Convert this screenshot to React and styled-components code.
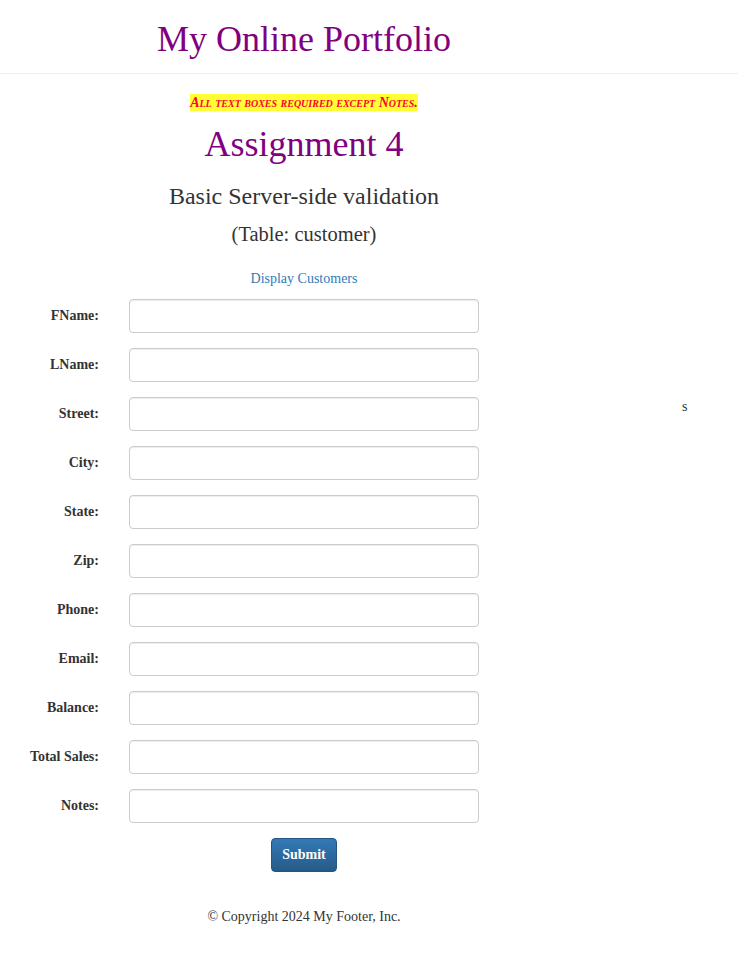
import styled, { createGlobalStyle } from 'styled-components';

const GlobalStyle = createGlobalStyle`
    body{
        margin: 0;
        font-family: "Liberation Serif", "Times New Roman", serif;
        font-size: 14px;
        line-height: 1.42857;
        color: #333333;
        background: #ffffff;
    }
    *{ box-sizing: border-box; }
`;

const fields = ["FName", "LName", "Street", "City", "State", "Zip", "Phone", "Email", "Balance", "Total Sales", "Notes"];

export default function App(){
    return(
        <>
            <GlobalStyle />
            <Header>
                <Brand>My Online Portfolio</Brand>
            </Header>
            <Page>
                <Main>
                    <Notice>All text boxes required except Notes.</Notice>
                    <Title>Assignment 4</Title>
                    <Subtitle>Basic Server-side validation</Subtitle>
                    <TableName>(Table: customer)</TableName>
                    <LinkLine><a href="#">Display Customers</a></LinkLine>
                    <Form onSubmit={(e) => e.preventDefault()}>
                        {fields.map((f) => (
                            <Row key={f}>
                                <Label>{f}:</Label>
                                <Input type="text" />
                            </Row>
                        ))}
                        <ButtonRow>
                            <SubmitButton type="submit">Submit</SubmitButton>
                        </ButtonRow>
                    </Form>
                    <Footer>© Copyright 2024 My Footer, Inc.</Footer>
                </Main>
                <Side>s</Side>
            </Page>
        </>
    )
}

const Header = styled.header`
    height: 74px;
    border-bottom: 1px solid #eeeeee;
    width: 100%;
`;

const Brand = styled.h1`
    width: 608px;
    margin: 0;
    padding-top: 20px;
    text-align: center;
    font-weight: normal;
    font-size: 36px;
    line-height: 1.1;
    color: #800080;
`;

const Page = styled.div`
    display: flex;
`;

const Main = styled.div`
    width: 608px;
    display: flex;
    flex-direction: column;
    align-items: center;
`;

const Side = styled.div`
    padding-top: 323px;
    padding-left: 74px;
    font-size: 14px;
`;

const Notice = styled.p`
    margin: 20px 0 0;
    background: #ffff33;
    color: #ff0033;
    font-weight: bold;
    font-style: italic;
    font-variant: small-caps;
    font-size: 14px;
    line-height: 17px;
`;

const Title = styled.h2`
    margin: 14px 0 0;
    font-weight: normal;
    font-size: 36px;
    line-height: 1.1;
    color: #800080;
`;

const Subtitle = styled.h3`
    margin: 18px 0 0;
    font-weight: normal;
    font-size: 24px;
    line-height: 1.1;
`;

const TableName = styled.h4`
    margin: 14px 0 0;
    font-weight: normal;
    font-size: 20.5px;
    line-height: 1.1;
`;

const LinkLine = styled.p`
    margin: 23px 0 0;
    a{
        color: #337ab7;
        text-decoration: none;
    }
`;

const Form = styled.form`
    width: 100%;
    margin-top: 10px;
    display: flex;
    flex-direction: column;
    gap: 15px;
`;

const Row = styled.div`
    display: grid;
    grid-template-columns: 99px 350px;
    column-gap: 30px;
    align-items: center;
`;

const Label = styled.label`
    text-align: right;
    font-weight: bold;
`;

const Input = styled.input`
    height: 34px;
    width: 350px;
    padding: 6px 12px;
    border: 1px solid #cccccc;
    border-radius: 4px;
    box-shadow: inset 0 1px 1px rgba(0,0,0,0.075);
    font-family: inherit;
    font-size: 14px;
`;

const ButtonRow = styled.div`
    display: flex;
    justify-content: center;
`;

const SubmitButton = styled.button`
    height: 34px;
    padding: 6px 10px;
    font-family: inherit;
    font-size: 14px;
    font-weight: bold;
    color: #ffffff;
    border: 1px solid #245580;
    border-radius: 4px;
    background-image: linear-gradient(to bottom, #337ab7 0, #265a88 100%);
    cursor: pointer;
`;

const Footer = styled.footer`
    margin-top: 35px;
    text-align: center;
`;
